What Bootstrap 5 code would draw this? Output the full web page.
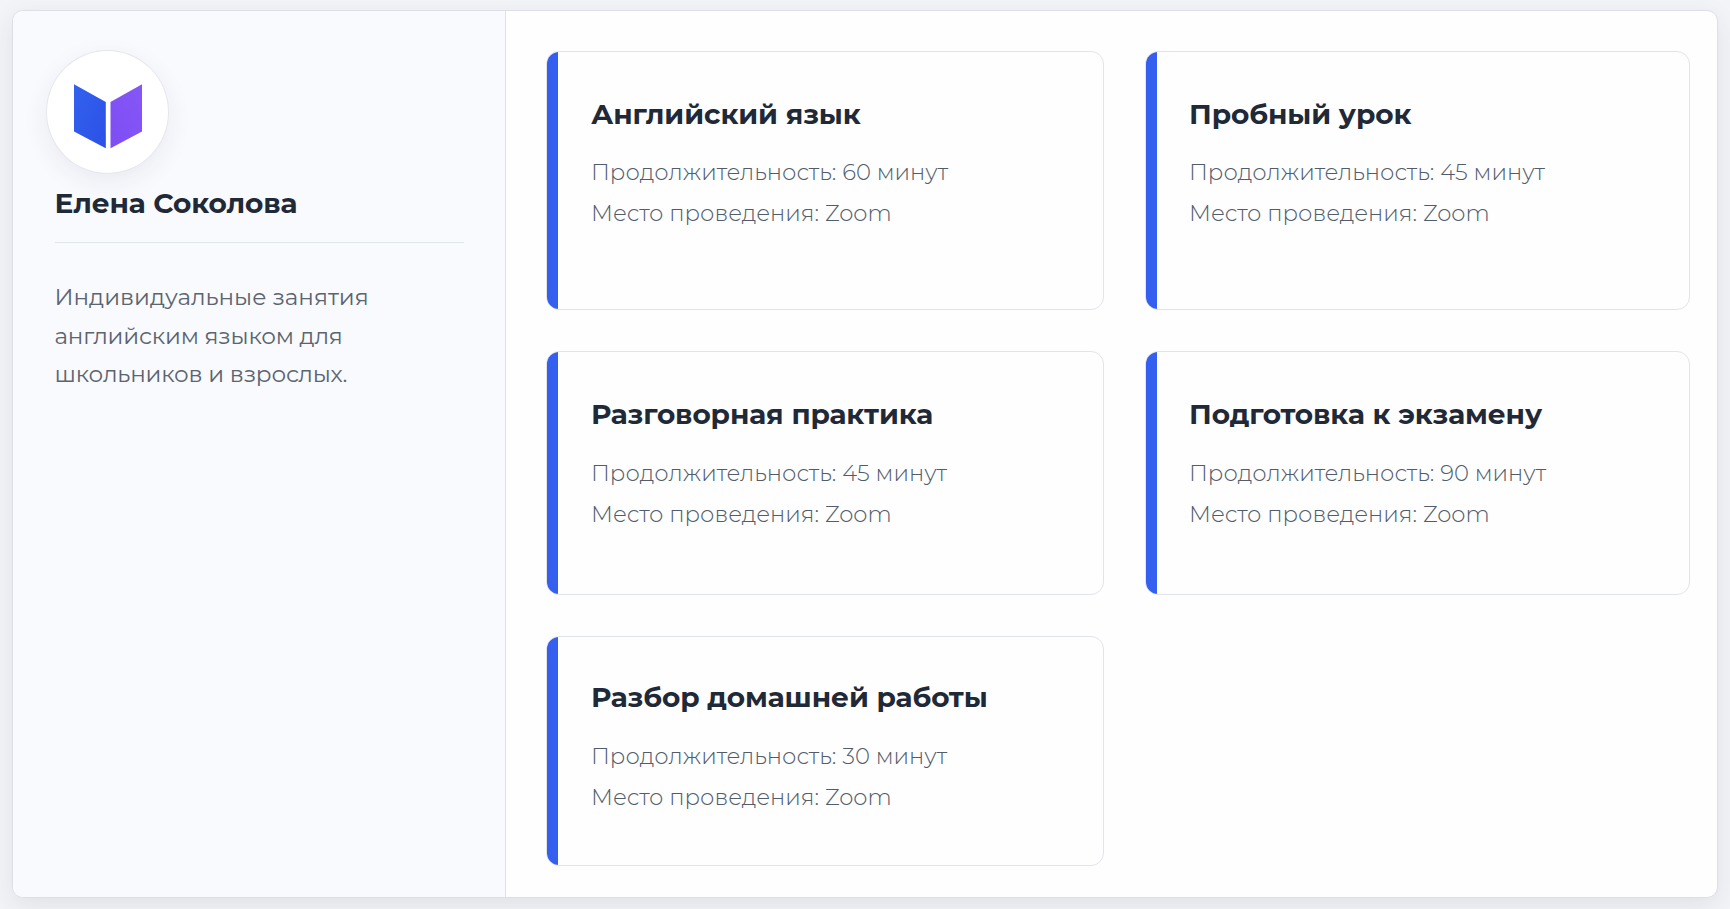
<!DOCTYPE html>
<html lang="ru">
<head>
<meta charset="utf-8">
<meta name="viewport" content="width=device-width, initial-scale=1">
<title>Елена Соколова</title>
<link href="https://cdn.jsdelivr.net/npm/bootstrap@5.3.0/dist/css/bootstrap.min.css" rel="stylesheet">
<style>
  body { font-family: Montserrat, "Noto Sans", sans-serif; background: #f3f4f7; color: #1f2937; }
  .page-wrap { height: 909px; padding: 10px 12px 11px; }
  .booking { border: 1px solid #dce0e6; border-radius: 11px; background: #fefefe; box-shadow: 0 8px 26px rgba(31, 41, 55, .09); }
  .profile { width: 493px; padding: 39px 41px 0 42px; background: #f9fafe; border-right: 1px solid #dfe3e9; border-radius: 10px 0 0 10px; }
  .brand-mark { width: 123px; height: 124px; margin-left: -9px; background: #fff; border: 1px solid #e5e7ec; box-shadow: 0 8px 26px rgba(31, 41, 55, .07); }
  .brand-mark svg { margin-top: 7px; }
  .heading { font-size: 28px; line-height: 34px; font-weight: 700; letter-spacing: -.1px; color: #1f2937; white-space: nowrap; }
  .owner { letter-spacing: -.15px; margin-left: -.5px; }
  .rule { height: 1px; background: #e0e5ea; margin: 22px 0 35px; }
  .about { font-size: 23.1px; line-height: 38.6px; font-weight: 400; color: #5b6470; margin-left: -.5px; }
  .about .tight { letter-spacing: -.2px; }
  .services { display: grid; grid-template-columns: 558px 545px; grid-template-rows: 259px 244px 230px; gap: 41px 41px; padding: 40px 0 0 40px; }
  .service { border: 1px solid #e1e5ea; border-radius: 13px; background: #fefefe; overflow: hidden; }
  .accent { width: 12px; margin: 0 0 0 -1px; background: #345fef; }
  .service-text { padding: 45px 0 0 33px; }
  .service-text.alt { padding-left: 32px; }
  .service-text.last { padding-top: 43px; }
  .details { font-size: 22.75px; line-height: 41px; font-weight: 300; color: #515d6c; margin-top: 21px; }
  .middle .details, .last .details { margin-top: 22px; }
</style>
</head>
<body>
<div class="page-wrap">
  <main class="booking d-flex h-100">
    <aside class="profile flex-shrink-0">
      <div class="brand-mark rounded-circle d-flex align-items-center justify-content-center">
        <svg width="70" height="66" viewBox="0 0 70 66" aria-hidden="true">
          <defs>
            <linearGradient id="pageLeft" x1="0" y1="0" x2="1" y2="1"><stop offset="0" stop-color="#3362ee"/><stop offset="1" stop-color="#2b50e6"/></linearGradient>
            <linearGradient id="pageRight" x1="1" y1="0" x2="0" y2="1"><stop offset="0" stop-color="#8657f5"/><stop offset="1" stop-color="#7d4df5"/></linearGradient>
          </defs>
          <path d="M1 1.2 32.8 19v46.2L1 48.5Z" fill="url(#pageLeft)"/>
          <path d="M37.5 19 69 1.2v47.3L37.5 65.2Z" fill="url(#pageRight)"/>
        </svg>
      </div>
      <h1 class="heading owner mb-0 mt-2 pt-1">Елена Соколова</h1>
      <div class="rule"></div>
      <p class="about mb-0">Индивидуальные занятия<br><span class="tight">английским языком для<br>школьников и взрослых.</span></p>
    </aside>
    <section class="services">
      <article class="service d-flex">
        <div class="accent"></div>
        <div class="service-text"><h2 class="heading mb-0">Английский язык</h2><div class="details">Продолжительность: 60 минут<br>Место проведения: Zoom</div></div>
      </article>
      <article class="service d-flex">
        <div class="accent"></div>
        <div class="service-text alt"><h2 class="heading mb-0">Пробный урок</h2><div class="details">Продолжительность: 45 минут<br>Место проведения: Zoom</div></div>
      </article>
      <article class="service middle d-flex">
        <div class="accent"></div>
        <div class="service-text"><h2 class="heading mb-0">Разговорная практика</h2><div class="details">Продолжительность: 45 минут<br>Место проведения: Zoom</div></div>
      </article>
      <article class="service middle d-flex">
        <div class="accent"></div>
        <div class="service-text alt"><h2 class="heading mb-0">Подготовка к экзамену</h2><div class="details">Продолжительность: 90 минут<br>Место проведения: Zoom</div></div>
      </article>
      <article class="service d-flex">
        <div class="accent"></div>
        <div class="service-text last"><h2 class="heading mb-0">Разбор домашней работы</h2><div class="details">Продолжительность: 30 минут<br>Место проведения: Zoom</div></div>
      </article>
    </section>
  </main>
</div>
<script src="https://cdn.jsdelivr.net/npm/bootstrap@5.3.0/dist/js/bootstrap.bundle.min.js"></script>
</body>
</html>
